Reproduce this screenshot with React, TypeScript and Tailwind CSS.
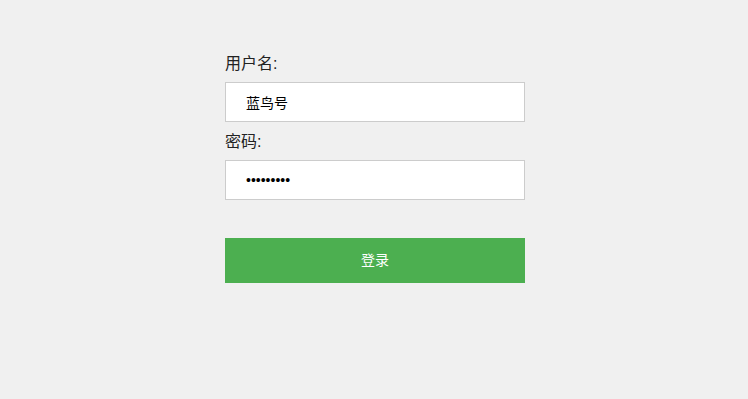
import { useState } from 'react';

export default function App() {
  const [username, setUsername] = useState('蓝鸟号');
  const [password, setPassword] = useState('123456789');

  return (
    <main
      className="min-h-screen bg-[#f0f0f0] text-[#222] pl-[2px]"
      style={{ fontFamily: '"Liberation Sans", "Noto Sans CJK SC", sans-serif' }}
    >
      <form
        className="mx-auto w-[300px] pt-[52px]"
        onSubmit={(e) => e.preventDefault()}
      >
        {/* Username */}
        <label className="block text-[16px] leading-6 mb-[6px]">用户名:</label>
        <input
          type="text"
          value={username}
          onChange={(e) => setUsername(e.target.value)}
          className="block w-full h-10 border border-[#ccc] bg-white pl-5 text-[14px] text-black outline-none"
        />

        {/* Password */}
        <label className="block text-[16px] leading-6 mt-2 mb-[6px]">密码:</label>
        <input
          type="password"
          value={password}
          onChange={(e) => setPassword(e.target.value)}
          className="block w-full h-10 border border-[#ccc] bg-white pl-5 text-[14px] text-black outline-none"
        />

        <button
          type="submit"
          className="mt-[38px] block w-full h-[45px] bg-[#4caf50] text-white text-[14px]"
        >
          登录
        </button>
      </form>
    </main>
  );
}
